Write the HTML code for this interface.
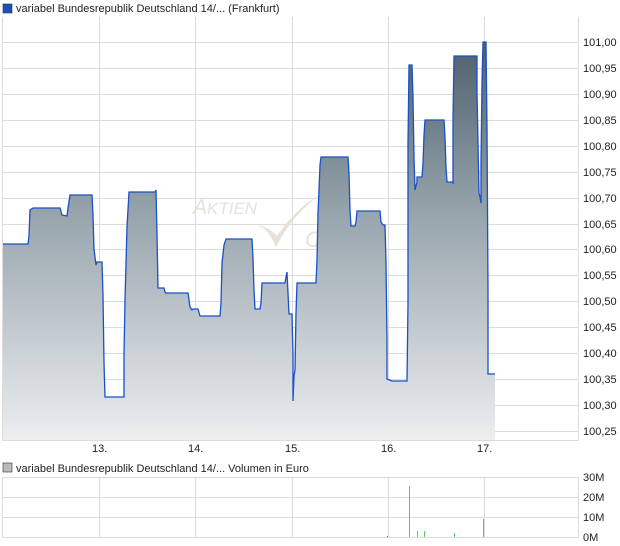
<!DOCTYPE html>
<html><head><meta charset="utf-8"><style>
body{margin:0;background:#fff;width:620px;height:546px;overflow:hidden}
svg{display:block;font-family:"Liberation Sans",sans-serif}
</style></head><body>
<svg width="620" height="546" viewBox="0 0 620 546">
<defs>
<linearGradient id="g" gradientUnits="userSpaceOnUse" x1="0" y1="42" x2="0" y2="440">
<stop offset="0" stop-color="#4e606c"/><stop offset="0.45" stop-color="#9aa7af"/><stop offset="1" stop-color="#eceef0"/>
</linearGradient>
</defs>
<rect x="3" y="4" width="9" height="9" fill="#1a4fc0" stroke="#333" stroke-width="0.6"/>
<text x="16" y="12" font-size="11" fill="#222">variabel Bundesrepublik Deutschland 14/... (Frankfurt)</text>
<g stroke="#dcdcdc" stroke-width="1">
<line x1="2.5" y1="17" x2="2.5" y2="441"/>
<line x1="578.5" y1="17" x2="578.5" y2="441"/>
<line x1="2" y1="440.5" x2="579" y2="440.5"/>
<line x1="99.5" y1="17" x2="99.5" y2="441"/>
<line x1="195.5" y1="17" x2="195.5" y2="441"/>
<line x1="292.5" y1="17" x2="292.5" y2="441"/>
<line x1="388.5" y1="17" x2="388.5" y2="441"/>
<line x1="484.5" y1="17" x2="484.5" y2="441"/>
<line x1="2" y1="42.5" x2="579" y2="42.5"/><line x1="2" y1="68.5" x2="579" y2="68.5"/><line x1="2" y1="94.5" x2="579" y2="94.5"/><line x1="2" y1="120.5" x2="579" y2="120.5"/><line x1="2" y1="146.5" x2="579" y2="146.5"/><line x1="2" y1="172.5" x2="579" y2="172.5"/><line x1="2" y1="198.5" x2="579" y2="198.5"/><line x1="2" y1="224.5" x2="579" y2="224.5"/><line x1="2" y1="249.5" x2="579" y2="249.5"/><line x1="2" y1="275.5" x2="579" y2="275.5"/><line x1="2" y1="301.5" x2="579" y2="301.5"/><line x1="2" y1="327.5" x2="579" y2="327.5"/><line x1="2" y1="353.5" x2="579" y2="353.5"/><line x1="2" y1="379.5" x2="579" y2="379.5"/><line x1="2" y1="405.5" x2="579" y2="405.5"/><line x1="2" y1="431.5" x2="579" y2="431.5"/>
</g>
<text x="193" y="214" font-size="21" font-style="italic" fill="#e6e2da">A<tspan font-size="17">KTIEN</tspan></text>
<path d="M256 224 Q268 228 276 247 Q292 215 322 193 Q296 208 277 236 Q270 228 256 224Z" fill="#e6e2da"/>
<text x="305" y="247" font-size="22" font-style="italic" fill="#e6e2da">C</text>
<path id="p" d="M3 244 L28 244 L29 236 L30 210 L33 208 L60 208 L62 215 L67 216 L68 208 L70 195 L92 195 L93 215 L94 249 L96 265 L97 262 L102 262 L103 296 L104 363 L105 397 L124 397 L124 355 L125 300 L127 227 L129 192 L155 192 L156 190 L157 234 L158 288 L164 288 L165 292 L166 293 L188 293 L190 307 L192 310 L193 309 L198 309 L200 316 L220 316 L221 303 L222 263 L224 245 L226 239 L252 239 L253 258 L254 290 L255 309 L260 309 L261 303 L262 283 L285 283 L286 277 L287 272 L288 293 L289 314 L292 314 L293 355 L293 401 L294 376 L295 370 L296 313 L297 283 L316 283 L317 260 L318 213 L319 190 L320 165 L321 157 L348 157 L349 173 L350 210 L351 226 L355 226 L356 222 L357 211 L380 211 L381 222 L383 225 L385 225 L386 263 L387 340 L387 379 L392 381 L407 381 L408 302 L408 143 L409 65 L412 65 L413 97 L414 157 L415 190 L417 182 L417 177 L422 177 L423 163 L424 135 L425 120 L444 120 L445 137 L446 167 L447 182 L452 182 L453 183 L453 120 L454 56 L477 56 L477 92 L479 193 L480 197 L481 203 L481 163 L482 83 L483 42 L486 42 L487 127 L488 290 L488 374 L495 374" fill="none"/>
<path d="M3 244 L28 244 L29 236 L30 210 L33 208 L60 208 L62 215 L67 216 L68 208 L70 195 L92 195 L93 215 L94 249 L96 265 L97 262 L102 262 L103 296 L104 363 L105 397 L124 397 L124 355 L125 300 L127 227 L129 192 L155 192 L156 190 L157 234 L158 288 L164 288 L165 292 L166 293 L188 293 L190 307 L192 310 L193 309 L198 309 L200 316 L220 316 L221 303 L222 263 L224 245 L226 239 L252 239 L253 258 L254 290 L255 309 L260 309 L261 303 L262 283 L285 283 L286 277 L287 272 L288 293 L289 314 L292 314 L293 355 L293 401 L294 376 L295 370 L296 313 L297 283 L316 283 L317 260 L318 213 L319 190 L320 165 L321 157 L348 157 L349 173 L350 210 L351 226 L355 226 L356 222 L357 211 L380 211 L381 222 L383 225 L385 225 L386 263 L387 340 L387 379 L392 381 L407 381 L408 302 L408 143 L409 65 L412 65 L413 97 L414 157 L415 190 L417 182 L417 177 L422 177 L423 163 L424 135 L425 120 L444 120 L445 137 L446 167 L447 182 L452 182 L453 183 L453 120 L454 56 L477 56 L477 92 L479 193 L480 197 L481 203 L481 163 L482 83 L483 42 L486 42 L487 127 L488 290 L488 374 L495 374 L495 440 L3 440 Z" fill="url(#g)"/>
<use href="#p" stroke="#1a50c8" stroke-width="1.3"/>
<g font-size="11" fill="#222">
<text x="583" y="46">101,00</text><text x="583" y="72">100,95</text><text x="583" y="98">100,90</text><text x="583" y="124">100,85</text><text x="583" y="150">100,80</text><text x="583" y="176">100,75</text><text x="583" y="202">100,70</text><text x="583" y="228">100,65</text><text x="583" y="253">100,60</text><text x="583" y="279">100,55</text><text x="583" y="305">100,50</text><text x="583" y="331">100,45</text><text x="583" y="357">100,40</text><text x="583" y="383">100,35</text><text x="583" y="409">100,30</text><text x="583" y="435">100,25</text>
<text x="92" y="452">13.</text><text x="188" y="452">14.</text><text x="285" y="452">15.</text><text x="381" y="452">16.</text><text x="477" y="452">17.</text>
<text x="16" y="472">variabel Bundesrepublik Deutschland 14/... Volumen in Euro</text>
<text x="583" y="481">30M</text><text x="583" y="501">20M</text><text x="583" y="521">10M</text><text x="583" y="541">0M</text>
</g>
<rect x="3" y="463" width="9" height="9" fill="#bbb" stroke="#333" stroke-width="0.6"/>
<g stroke="#dcdcdc" stroke-width="1">
<line x1="2.5" y1="477" x2="2.5" y2="537"/><line x1="578.5" y1="477" x2="578.5" y2="537"/>
<line x1="2" y1="477.5" x2="579" y2="477.5"/><line x1="2" y1="497.5" x2="579" y2="497.5"/><line x1="2" y1="517.5" x2="579" y2="517.5"/><line x1="2" y1="537.5" x2="579" y2="537.5"/>
<line x1="99.5" y1="477" x2="99.5" y2="537"/><line x1="195.5" y1="477" x2="195.5" y2="537"/><line x1="292.5" y1="477" x2="292.5" y2="537"/><line x1="388.5" y1="477" x2="388.5" y2="537"/><line x1="484.5" y1="477" x2="484.5" y2="537"/>
</g>
<g fill="#55cc55">
<rect x="409" y="486" width="1" height="51"/><rect x="417" y="531" width="1" height="6"/><rect x="424" y="531" width="1" height="6"/><rect x="454" y="533" width="1" height="4"/><rect x="483" y="519" width="1" height="18"/>
</g>
<rect x="387" y="536" width="1" height="1" fill="#c44"/>
</svg>
</body></html>
